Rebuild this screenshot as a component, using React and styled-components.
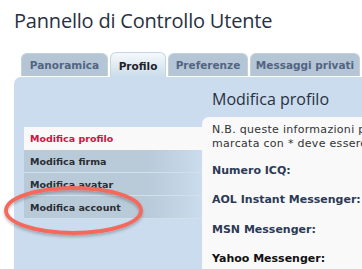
import React from "react";
import styled, { createGlobalStyle } from "styled-components";

const Global = createGlobalStyle`
  html, body { margin: 0; padding: 0; background: #ffffff; }
  body { font-family: "DejaVu Sans", Verdana, sans-serif; overflow: hidden; }
`;

const Page = styled.div`
  position: relative;
  width: 362px;
  height: 269px;
  overflow: hidden;
  padding-left: 14px;
  box-sizing: border-box;
`;

const Title = styled.h2`
  margin: 0;
  padding-top: 8px;
  font-family: "Open Sans", sans-serif;
  font-weight: 400;
  font-size: 20px;
  line-height: 26px;
  color: #28313f;
  white-space: nowrap;
  letter-spacing: -0.2px;
`;

const Tabs = styled.ul`
  list-style: none;
  margin: 18px 0 0 7px;
  padding: 0;
  display: flex;
  align-items: flex-end;
  gap: 2px;
  height: 25px;
  white-space: nowrap;
`;

const Tab = styled.li`
  box-sizing: border-box;
  width: ${(p) => p.$w}px;
  height: ${(p) => (p.$active ? "25px" : "23px")};
  margin-bottom: ${(p) => (p.$active ? "0" : "1px")};
  display: flex;
  align-items: center;
  justify-content: center;
  font-size: 10.5px;
  font-weight: 700;
  color: ${(p) => (p.$active ? "#1f2229" : "#536482")};
  background: ${(p) =>
    p.$active
      ? "linear-gradient(to bottom, #f6f9fb 0%, #cadceb 100%)"
      : "#b4c6d6"};
  border: 1px solid ${(p) => (p.$active ? "#c5d5e3" : "#c2d1de")};
  border-bottom: none;
  border-radius: 6px 6px 0 0;
  flex-shrink: 0;
  padding-top: ${(p) => (p.$active ? "1px" : "0")};
`;

const Panel = styled.div`
  background: #cadced;
  border-radius: 7px 0 0 0;
  height: 200px;
  display: grid;
  grid-template-columns: 188px 1fr;
`;

const Menu = styled.ul`
  list-style: none;
  margin: 0;
  padding: 50px 0 0 10px;
  display: flex;
  flex-direction: column;
`;

const MenuItem = styled.li`
  height: 22px;
  display: flex;
  align-items: center;
  padding-left: 6px;
  font-size: 9.5px;
  font-weight: 700;
  white-space: nowrap;
  color: ${(p) => (p.$active ? "#d31141" : "#2a2d33")};
  background: ${(p) =>
    p.$active
      ? "#f9f9f9"
      : "linear-gradient(to right, #b8c9d8 0%, #b9cad9 70%, #cadced 100%)"};
  border-bottom: 1px solid ${(p) => (p.$active ? "#f9f9f9" : "#d3dfea")};
`;

const Content = styled.div`
  display: flex;
  flex-direction: column;
`;

const Heading = styled.h3`
  margin: 0;
  padding: 12px 0 0 10px;
  height: 40px;
  box-sizing: border-box;
  font-family: "Open Sans", sans-serif;
  font-weight: 400;
  font-size: 16px;
  line-height: 20px;
  color: #28313f;
  white-space: nowrap;
`;

const Box = styled.div`
  flex: 1;
  background: #f9f9f9;
  border-radius: 7px 0 0 0;
  padding: 6px 0 0 10px;
`;

const Note = styled.p`
  margin: 0 0 13px;
  font-size: 11px;
  line-height: 14px;
  letter-spacing: 0.3px;
  color: #333333;
  white-space: nowrap;
`;

const Field = styled.div`
  font-size: 11px;
  font-weight: 700;
  color: ${(p) => (p.$dark ? "#111111" : "#2c3a55")};
  height: 29.3px;
  line-height: 14px;
  white-space: nowrap;
`;

const Annotation = styled.svg`
  position: absolute;
  left: 0;
  top: 180px;
  pointer-events: none;
`;

export default function App() {
  const tabs = [
    { label: "Panoramica", w: 87 },
    { label: "Profilo", w: 56, active: true },
    { label: "Preferenze", w: 80 },
    { label: "Messaggi privati", w: 110 },
    { label: "Amici", w: 60 },
  ];
  const items = [
    { label: "Modifica profilo", active: true },
    { label: "Modifica firma" },
    { label: "Modifica avatar" },
    { label: "Modifica account" },
  ];
  const fields = [
    "Numero ICQ:",
    "AOL Instant Messenger:",
    "MSN Messenger:",
    "Yahoo Messenger:",
  ];
  return (
    <Page>
      <Global />
      <Title>Pannello di Controllo Utente</Title>
      <Tabs>
        {tabs.map((t) => (
          <Tab key={t.label} $active={t.active} $w={t.w}>
            {t.label}
          </Tab>
        ))}
      </Tabs>
      <Panel>
        <Menu>
          {items.map((i) => (
            <MenuItem key={i.label} $active={i.active}>
              {i.label}
            </MenuItem>
          ))}
        </Menu>
        <Content>
          <Heading>Modifica profilo</Heading>
          <Box>
            <Note>
              N.B. queste informazioni potranno essere viste dagli altri utenti.
              <br />
              marcata con * deve essere compilata.
            </Note>
            {fields.map((f, idx) => (
              <Field key={f} $dark={idx === 3}>
                {f}
              </Field>
            ))}
          </Box>
        </Content>
      </Panel>
      <Annotation width="160" height="70" viewBox="0 0 160 70">
        <defs>
          <filter id="sh" x="-10%" y="-20%" width="120%" height="150%">
            <feDropShadow dx="0" dy="2" stdDeviation="1.5" floodColor="#000" floodOpacity="0.25" />
          </filter>
        </defs>
        <ellipse
          cx="73.5"
          cy="30.5"
          rx="67.5"
          ry="22.5"
          fill="none"
          stroke="#f36a5b"
          strokeWidth="3.8"
          filter="url(#sh)"
        />
      </Annotation>
    </Page>
  );
}
